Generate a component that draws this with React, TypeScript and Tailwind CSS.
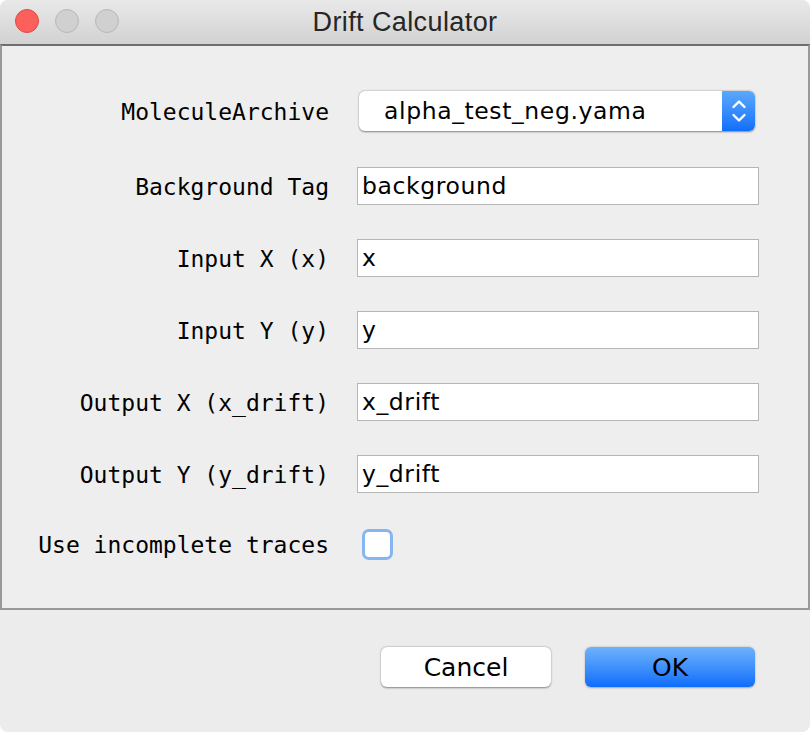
import React from "react";

const labelFont = { fontFamily: '"DejaVu Sans Mono", monospace' };

function Field({ label, value }: { label: string; value: string }) {
  return (
    <div className="flex items-center h-[38px]">
      <div className="w-[327px] text-right text-[23px] text-black pt-[3px]" style={labelFont}>{label}</div>
      <div className="ml-[28px] w-[402px] h-[38px] bg-white border border-[#b5b5b5] flex items-center pl-[4px] pt-[1px] text-[23.5px] text-black font-['DejaVu_Sans',sans-serif] tracking-[0.6px]">
        {value}
      </div>
    </div>
  );
}

export default function App() {
  return (
    <div className="w-[810px] h-[732px] bg-white">
      <div className="w-[810px] h-[732px] bg-[#ececec] rounded-t-[8px] rounded-b-[8px] overflow-hidden flex flex-col">
        <div className="h-[44px] bg-gradient-to-b from-[#e9e9e9] to-[#d2d2d2] relative flex items-center justify-center shrink-0">
          <div className="absolute left-[15px] top-[9px] flex gap-[16px]">
            <div className="w-[24px] h-[24px] rounded-full bg-[#fc605b] border border-[#de4a45]" />
            <div className="w-[24px] h-[24px] rounded-full bg-[#d0d0d0] border border-[#b8b8b8]" />
            <div className="w-[24px] h-[24px] rounded-full bg-[#d0d0d0] border border-[#b8b8b8]" />
          </div>
          <div className="text-[27px] pt-[1px] text-[#262626] font-['Liberation_Sans',sans-serif] tracking-[0.4px]">Drift Calculator</div>
        </div>
        <div className="h-[566px] border-t-2 border-t-[#6e6e6e] border-x-2 border-x-[#999] border-b-2 border-b-[#999] bg-[#eeeeee] flex flex-col shrink-0">
          <div className="flex items-center h-[40px] mt-[45px]">
            <div className="w-[327px] text-right text-[23px] text-black pt-[3px]" style={labelFont}>MoleculeArchive</div>
            <div className="ml-[30px] w-[396px] h-[40px] bg-white rounded-[6px] shadow-[0_0.5px_2px_rgba(0,0,0,0.45)] flex overflow-hidden">
              <div className="flex-1 flex items-center pl-[25px] pt-[1px] text-[23.5px] text-black font-['DejaVu_Sans',sans-serif] tracking-[0.6px]">alpha_test_neg.yama</div>
              <div className="w-[33px] h-full bg-gradient-to-b from-[#5aa8fb] to-[#0e6ffb] flex items-center justify-center">
                <svg width="18" height="28" viewBox="0 0 18 28" fill="none" stroke="white" strokeWidth="2.4" strokeLinecap="round" strokeLinejoin="round">
                  <path d="M3.5 10 L9 4.5 L14.5 10" />
                  <path d="M3.5 18 L9 23.5 L14.5 18" />
                </svg>
              </div>
            </div>
          </div>
          <div className="mt-[36px] flex flex-col gap-[34px]">
            <Field label="Background Tag" value="background" />
            <Field label="Input X (x)" value="x" />
            <Field label="Input Y (y)" value="y" />
            <Field label="Output X (x_drift)" value="x_drift" />
            <Field label="Output Y (y_drift)" value="y_drift" />
          </div>
          <div className="flex items-center h-[30px] mt-[36px]">
            <div className="w-[327px] text-right text-[23px] text-black pt-[2px]" style={labelFont}>Use incomplete traces</div>
            <div className="ml-[33px] w-[31px] h-[31px] bg-white rounded-[7px] border-[3px] border-[#86b6f2]" />
          </div>
        </div>
        <div className="flex-1 flex justify-end items-start pt-[37px] pr-[55px] gap-[34px]">
          <button className="w-[170px] h-[40px] pt-[2px] bg-white rounded-[6px] shadow-[0_0.5px_2px_rgba(0,0,0,0.45)] text-[25px] text-black font-['DejaVu_Sans',sans-serif]">Cancel</button>
          <button className="w-[170px] h-[40px] pt-[2px] rounded-[6px] bg-gradient-to-b from-[#6cb2fb] to-[#0a6cfb] shadow-[0_0.5px_2px_rgba(0,0,0,0.3)] text-[25px] text-black font-['DejaVu_Sans',sans-serif]">OK</button>
        </div>
      </div>
    </div>
  );
}
